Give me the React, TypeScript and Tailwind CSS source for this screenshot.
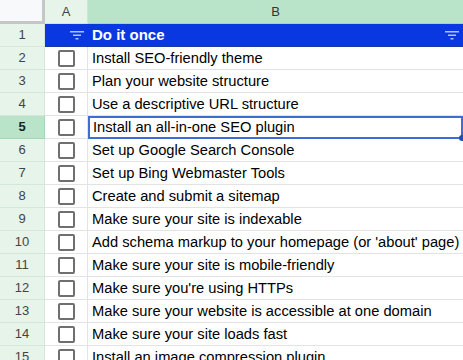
const tasks = [
  "Install SEO-friendly theme",
  "Plan your website structure",
  "Use a descriptive URL structure",
  "Install an all-in-one SEO plugin",
  "Set up Google Search Console",
  "Set up Bing Webmaster Tools",
  "Create and submit a sitemap",
  "Make sure your site is indexable",
  "Add schema markup to your homepage (or 'about' page)",
  "Make sure your site is mobile-friendly",
  "Make sure you're using HTTPs",
  "Make sure your website is accessible at one domain",
  "Make sure your site loads fast",
  "Install an image compression plugin",
];

function FilterIcon() {
  return (
    <svg width="14" height="10" viewBox="0 0 14 10" className="shrink-0">
      <rect x="0" y="1" width="14" height="1.5" fill="#a9c4ff" />
      <rect x="3" y="4.5" width="8" height="1.5" fill="#a9c4ff" />
      <rect x="5.5" y="8" width="3" height="1.5" fill="#a9c4ff" />
    </svg>
  );
}

function Checkbox() {
  return <div className="w-[17px] h-[17px] border-2 border-[#6f6f6f] rounded-[2px] bg-white" />;
}

export default function App() {
  return (
    <div
      className="w-[463px] h-[360px] overflow-hidden bg-white text-[14.7px] text-black"
      style={{ fontFamily: '"Liberation Sans", Arial, sans-serif' }}
    >
      {/* column headers */}
      <div className="flex h-[24px]">
        <div className="w-[45px] shrink-0 bg-[#f8f9fa] border-r-[3px] border-b-[3px] border-[#c4c7c5]" />
        <div className="w-[43px] shrink-0 flex items-center justify-center bg-[#e6f4ea] text-[#444] text-[13px] border-r border-b border-[#cfe3d6]">
          A
        </div>
        <div className="flex-1 flex items-center justify-center bg-[#b9e4c9] text-[#333] text-[13px] border-b border-[#a6d5b7]">
          B
        </div>
      </div>

      {/* row 1 - header */}
      <div className="flex h-[23px]">
        <div className="w-[45px] shrink-0 flex items-center justify-center bg-[#e6f4ea] text-[#444] text-[13px] border-r border-b border-[#d5e6db]">
          1
        </div>
        <div className="flex-1 flex items-center bg-[#0a38e0] border-b border-[#1c3aa0]">
          <div className="w-[43px] shrink-0 flex items-center justify-end pr-[4px]">
            <FilterIcon />
          </div>
          <span className="pl-[4px] font-bold text-white text-[15px] flex-1">Do it once</span>
          <div className="pr-[4px]">
            <FilterIcon />
          </div>
        </div>
      </div>

      {tasks.map((t, i) => {
        const row = i + 2;
        const selected = row === 5;
        return (
          <div key={row} className="flex h-[23px]">
            <div
              className={
                selected
                  ? "w-[45px] shrink-0 flex items-center justify-center bg-[#b9e4c9] text-[#222] font-bold text-[13px] border-r border-b border-[#a6d5b7]"
                  : "w-[45px] shrink-0 flex items-center justify-center bg-[#e6f4ea] text-[#444] text-[13px] border-r border-b border-[#d5e6db]"
              }
            >
              {row}
            </div>
            <div className="w-[43px] shrink-0 flex items-center justify-center border-r border-b border-[#e2e3e3]">
              <Checkbox />
            </div>
            {selected ? (
              <div className="flex-1 relative flex items-center pl-[3px] border-2 border-[#3b6fd1] whitespace-nowrap overflow-visible">
                {t}
                <div className="absolute -right-[4px] -bottom-[4px] w-[6px] h-[6px] rounded-full bg-[#1e4fb0]" />
              </div>
            ) : (
              <div className="flex-1 flex items-center pl-[4px] border-b border-[#e2e3e3] whitespace-nowrap overflow-hidden">
                {t}
              </div>
            )}
          </div>
        );
      })}
    </div>
  );
}
